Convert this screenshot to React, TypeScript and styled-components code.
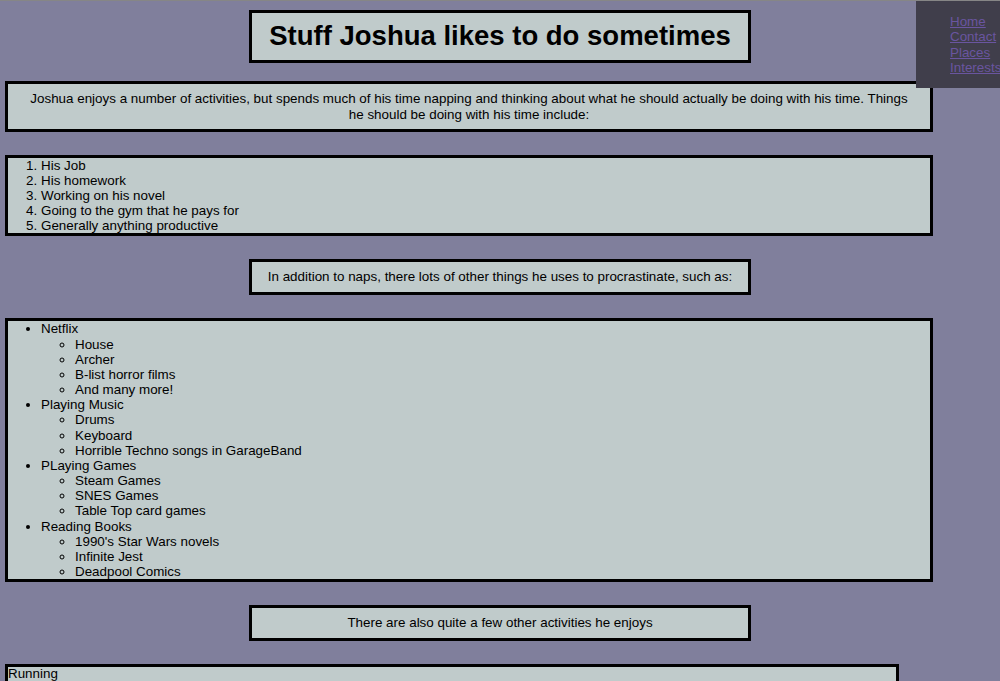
import React from "react";
import styled, { createGlobalStyle } from "styled-components";

const COLORS = {
  page: "#807f9c",
  box: "#c0cbcb",
  sidebar: "#403e4b",
  link: "#6a55a0",
  topLine: "#868686",
};

const GlobalStyle = createGlobalStyle`
  html, body {
    margin: 0;
    padding: 0;
    background-color: ${COLORS.page};
  }
  body {
    border-top: 1px solid ${COLORS.topLine};
    font-family: "Liberation Sans", Arial, Helvetica, sans-serif;
    font-size: 13.4px;
    color: #000;
  }
`;

const Page = styled.div`
  display: flex;
  flex-direction: column;
  align-items: flex-start;
  padding-top: 8px;
  gap: 23px;
`;

const Sidebar = styled.nav`
  position: absolute;
  top: 1px;
  right: 0;
  width: 84px;
  height: 87px;
  background-color: ${COLORS.sidebar};
  display: flex;
  flex-direction: column;
  padding: 13px 0 0 34px;
  box-sizing: border-box;
  overflow: hidden;
`;

const NavLink = styled.a`
  color: ${COLORS.link};
  font-size: 13.4px;
  line-height: 15.3px;
  text-decoration: underline;
  white-space: nowrap;
`;

const Box = styled.div<{ $width: number; $centered?: boolean }>`
  box-sizing: border-box;
  width: ${(p) => p.$width}px;
  margin-left: ${(p) => (p.$centered ? "auto" : "5px")};
  margin-right: ${(p) => (p.$centered ? "auto" : "0")};
  align-self: ${(p) => (p.$centered ? "center" : "flex-start")};
  background-color: ${COLORS.box};
  border: 3px solid #000;
`;

const TitleBox = styled(Box)`
  margin-top: 1px;
  margin-bottom: -5px;
  padding: 7px 0 8px;
  text-align: center;
`;

const Title = styled.h1`
  margin: 0;
  font-size: 27.5px;
  line-height: 32px;
  font-weight: bold;
`;

const TextBox = styled(Box)<{ $padBottom?: number }>`
  padding: 7px 14px ${(p) => p.$padBottom ?? 7}px;
  text-align: center;
  line-height: 16px;
`;

const OrderedList = styled.ol`
  margin: 0;
  padding-left: 33px;
  line-height: 15.1px;
`;

const BulletList = styled.ul`
  margin: 0;
  padding-left: 33px;
  line-height: 15.15px;
  list-style-type: disc;
`;

const SubList = styled.ul`
  margin: 0;
  padding-left: 34px;
  list-style-type: circle;
`;

const PlainBox = styled(Box)`
  line-height: 14px;
  height: 40px;
`;

const CATEGORIES = [
  { name: "Netflix", items: ["House", "Archer", "B-list horror films", "And many more!"] },
  { name: "Playing Music", items: ["Drums", "Keyboard", "Horrible Techno songs in GarageBand"] },
  { name: "PLaying Games", items: ["Steam Games", "SNES Games", "Table Top card games"] },
  { name: "Reading Books", items: ["1990's Star Wars novels", "Infinite Jest", "Deadpool Comics"] },
];

const TODOS = [
  "His Job",
  "His homework",
  "Working on his novel",
  "Going to the gym that he pays for",
  "Generally anything productive",
];

function App() {
  return (
    <>
      <GlobalStyle />
      <Sidebar>
        <NavLink href="#">Home</NavLink>
        <NavLink href="#">Contact</NavLink>
        <NavLink href="#">Places</NavLink>
        <NavLink href="#">Interests</NavLink>
      </Sidebar>
      <Page>
        <TitleBox $width={502} $centered>
          <Title>Stuff Joshua likes to do sometimes</Title>
        </TitleBox>
        <TextBox $width={928} $padBottom={6}>
          Joshua enjoys a number of activities, but spends much of his time napping and
          thinking about what he should actually be doing with his time. Things he should be
          doing with his time include:
        </TextBox>
        <Box $width={928}>
          <OrderedList>
            {TODOS.map((t) => (
              <li key={t}>{t}</li>
            ))}
          </OrderedList>
        </Box>
        <TextBox $width={502} $centered>
          In addition to naps, there lots of other things he uses to procrastinate, such as:
        </TextBox>
        <Box $width={928}>
          <BulletList>
            {CATEGORIES.map((c) => (
              <li key={c.name}>
                {c.name}
                <SubList>
                  {c.items.map((i) => (
                    <li key={i}>{i}</li>
                  ))}
                </SubList>
              </li>
            ))}
          </BulletList>
        </Box>
        <TextBox $width={502} $centered>
          There are also quite a few other activities he enjoys
        </TextBox>
        <PlainBox $width={894}>Running</PlainBox>
      </Page>
    </>
  );
}

export default App;
